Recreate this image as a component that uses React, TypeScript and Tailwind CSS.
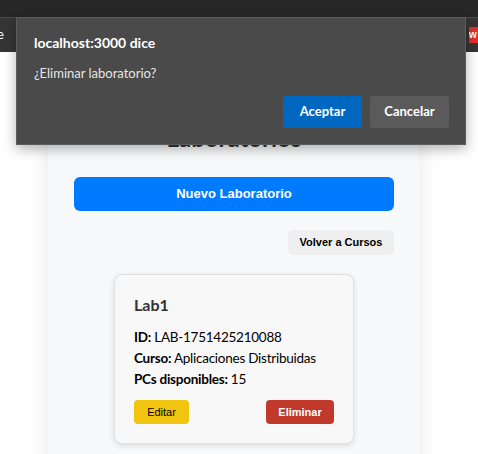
import React from "react";

export default function App() {
  const ui = { fontFamily: 'Lato, "Segoe UI", "Open Sans", sans-serif' };
  const arial = { fontFamily: '"Liberation Sans", Arial, sans-serif' };
  return (
    <div className="relative w-[478px] h-[454px] overflow-hidden bg-white">
      {/* browser chrome */}
      <div className="h-[17px] bg-[#272727]" />
      <div className="h-[35px] bg-[#353535] border-t border-[#4a4a4a] flex items-center justify-between">
        <span className="text-white text-[13px] -ml-[3px]" style={ui}>e</span>
        <span className="w-[9px] h-[16px] bg-[#e0312e] flex items-center overflow-hidden">
          <span className="text-white text-[10px] font-bold leading-none" style={arial}>w</span>
        </span>
      </div>

      {/* page */}
      <div className="ml-[48px] w-[371px] mt-[40px] pt-[30px] pl-[26px] pr-[25px] pb-10 bg-[#f8f9fa] shadow-[0_0_20px_rgba(0,0,0,0.1)] min-h-[500px]">
        <h2 className="text-center text-[24px] leading-[32px] font-bold text-[#333]" style={ui}>Laboratorios</h2>
        <button className="mt-[23px] w-full h-[34px] rounded-[6px] bg-[#007bff] text-white text-[13px] font-bold" style={arial}>
          Nuevo Laboratorio
        </button>
        <div className="flex justify-end mt-[19px]">
          <button className="h-[25px] w-[106px] rounded-[5px] bg-[#efefef] text-black text-[11px] font-bold" style={arial}>
            Volver a Cursos
          </button>
        </div>
        <div className="mt-[19px] mx-auto w-[240px] rounded-[8px] bg-[#f8f8f8] border border-[#e0e0e0] shadow-[0_2px_6px_rgba(0,0,0,0.12)] px-[19px] pt-[19px] pb-[19px]" style={ui}>
          <h3 className="text-[16px] leading-[22px] font-bold text-[#333]">Lab1</h3>
          <div className="mt-[11px] text-[13.5px] tracking-[-0.25px] leading-[21px] text-black">
            <p><b>ID:</b> LAB-1751425210088</p>
            <p><b>Curso:</b> Aplicaciones Distribuidas</p>
            <p><b>PCs disponibles:</b> 15</p>
          </div>
          <div className="mt-[10px] flex justify-between" style={arial}>
            <button className="h-[24px] w-[55px] rounded-[4px] bg-[#f1c40f] text-black text-[11px]">Editar</button>
            <button className="h-[24px] w-[68px] rounded-[4px] bg-[#c0392b] text-white text-[11px] font-bold">Eliminar</button>
          </div>
        </div>
      </div>

      {/* alert dialog */}
      <div className="absolute left-[16px] top-[17px] w-[450px] h-[128px] bg-[#4a4a4a] border border-[#5c5c5c] shadow-[0_4px_12px_rgba(0,0,0,0.3)] px-[17px] pt-[15px]" style={ui}>
        <div className="text-white text-[14px] font-bold leading-[20px]">localhost:3000 dice</div>
        <div className="mt-[10px] text-[#e6e6e6] text-[13px] leading-[20px]">¿Eliminar laboratorio?</div>
        <div className="absolute right-[16px] bottom-[16px] flex gap-[8px]">
          <button className="w-[79px] h-[32px] rounded-[3px] bg-[#0067c0] text-white text-[13px] font-bold">Aceptar</button>
          <button className="w-[79px] h-[32px] rounded-[3px] bg-[#5a5a5a] text-white text-[13px] font-bold">Cancelar</button>
        </div>
      </div>
    </div>
  );
}
